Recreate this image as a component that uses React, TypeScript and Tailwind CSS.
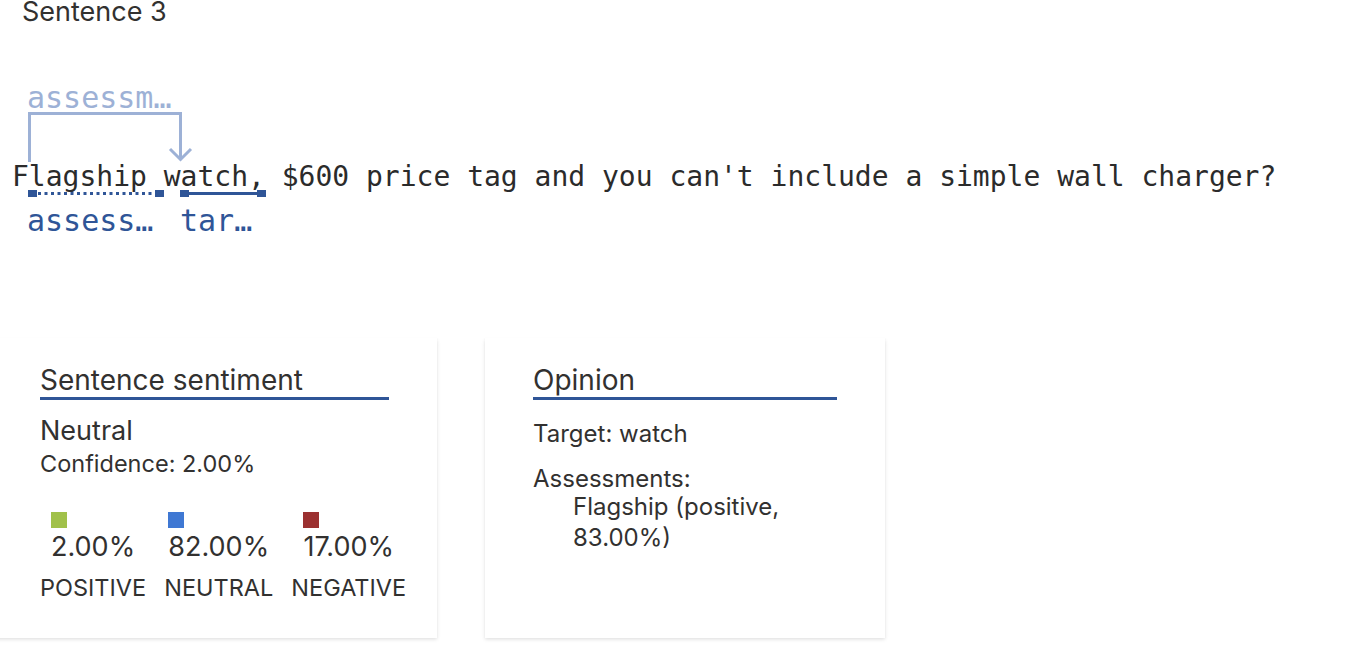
import React from "react";

const TEXT = "#323130";

function Annotations() {
  return (
    <>
      <svg className="absolute left-0 top-0" width="300" height="240" viewBox="0 0 300 240">
        <path d="M29.5 162 V113.5 H180.5 V159" fill="none" stroke="#9db1d6" strokeWidth="3" />
        <path d="M170 149 L180.5 159.5 L191 149" fill="none" stroke="#9db1d6" strokeWidth="3" />
        <rect x="28" y="190" width="9" height="7" fill="#2f5597" />
        <rect x="155" y="190" width="9" height="7" fill="#2f5597" />
        <line x1="38" y1="193.5" x2="155" y2="193.5" stroke="#2f5597" strokeWidth="3" strokeDasharray="3 3.5" />
        <rect x="180" y="190" width="9" height="7" fill="#2f5597" />
        <rect x="257" y="190" width="9" height="7" fill="#2f5597" />
        <line x1="188" y1="193.5" x2="257" y2="193.5" stroke="#2f5597" strokeWidth="3" />
      </svg>
      <span
        className="absolute left-[27px] top-[81px] text-[30px] leading-[34px] text-[#9db1d6]"
        style={{ fontFamily: '"DejaVu Sans Mono", monospace' }}
      >
        assessm…
      </span>
      <span
        className="absolute left-[27px] top-[204px] text-[30px] leading-[34px] text-[#2f5597]"
        style={{ fontFamily: '"DejaVu Sans Mono", monospace' }}
      >
        assess…
      </span>
      <span
        className="absolute left-[180px] top-[204px] text-[30px] leading-[34px] text-[#2f5597]"
        style={{ fontFamily: '"DejaVu Sans Mono", monospace' }}
      >
        tar…
      </span>
    </>
  );
}

function Score({ color, value, label }: { color: string; value: string; label: string }) {
  return (
    <div className="flex flex-col items-center">
      <div className="flex flex-col">
        <div className="w-4 h-4" style={{ backgroundColor: color }} />
        <div className="mt-[3px] text-[27px] leading-[32px]">{value}</div>
      </div>
      <div className="mt-[11px] text-[23.5px] leading-[28px]">{label}</div>
    </div>
  );
}

export default function App() {
  return (
    <div
      className="w-[1356px] h-[666px] bg-white overflow-hidden"
      style={{ fontFamily: 'Inter, "Noto Sans", sans-serif', color: TEXT }}
    >
      <div className="relative h-[338px]">
        <div className="pl-[22px] text-[27px] leading-[24px]">Sentence 3</div>
        <Annotations />
        <div
          className="absolute left-[12px] top-[160px] whitespace-pre text-[28px] leading-[34px]"
          style={{ fontFamily: '"DejaVu Sans Mono", monospace', color: "#2b2b2b" }}
        >
          Flagship watch, $600 price tag and you can't include a simple wall charger?
        </div>
      </div>

      <div className="flex gap-12 -ml-2">
        <div className="w-[445px] h-[300px] bg-white px-12 pt-[26px] shadow-[0_1.6px_3.6px_rgba(0,0,0,0.13),0_0.3px_0.9px_rgba(0,0,0,0.11)]">
          <div className="text-[28px] leading-[32px] pb-px border-b-[3px] border-[#2f5597]">Sentence sentiment</div>
          <div className="mt-[15px] text-[27px] leading-[32px]">Neutral</div>
          <div className="mt-[3px] text-[23.5px] leading-[28px]">Confidence: 2.00%</div>
          <div className="mt-[34px] flex gap-[18px]">
            <Score color="#a1c14a" value="2.00%" label="POSITIVE" />
            <Score color="#3f78d3" value="82.00%" label="NEUTRAL" />
            <Score color="#9b3030" value="17.00%" label="NEGATIVE" />
          </div>
        </div>
        <div className="w-[400px] h-[300px] bg-white px-12 pt-[26px] shadow-[0_1.6px_3.6px_rgba(0,0,0,0.13),0_0.3px_0.9px_rgba(0,0,0,0.11)]">
          <div className="text-[28px] leading-[32px] pb-px border-b-[3px] border-[#2f5597]">Opinion</div>
          <div className="mt-5 text-[24px] leading-[28px]">Target: watch</div>
          <div className="mt-[17px] text-[24px] leading-[28px]">Assessments:</div>
          <div className="-mt-[2px] pl-10 max-w-[280px] text-[24px] leading-[31px]">Flagship (positive, 83.00%)</div>
        </div>
      </div>
    </div>
  );
}
